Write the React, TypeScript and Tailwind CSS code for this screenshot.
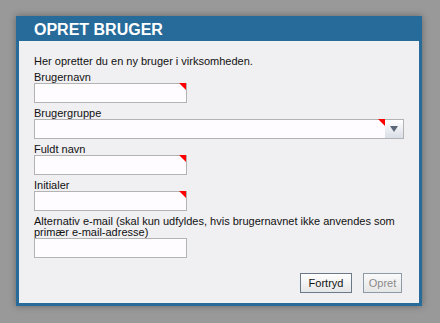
import React from "react";

function Corner() {
  return (
    <div
      className="absolute top-[-1px] right-0 w-0 h-0 border-t-[7px] border-l-[7px] border-t-[#ff0000] border-l-transparent"
    />
  );
}

function Field({ label, children, className = "" }: { label: React.ReactNode; children: React.ReactNode; className?: string }) {
  return (
    <div className={"mt-[4px] " + className}>
      <div className="leading-[12px]">{label}</div>
      {children}
    </div>
  );
}

function TextInput({ required = true }: { required?: boolean }) {
  return (
    <div className="relative w-[153px] h-[20px] border border-[#b3b3b3] bg-[#fefcff]">
      {required && <Corner />}
    </div>
  );
}

export default function App() {
  return (
    <div
      className="w-[440px] h-[323px] bg-[#999999] pl-[16px] pt-[16px] text-[11px] text-[#111111]"
      style={{ fontFamily: '"Liberation Sans", Arial, sans-serif' }}
    >
      <div className="w-[406px] h-[290px] border-[3px] border-[#276b9a] bg-[#f0eff1] flex flex-col shadow-[0_0_7px_rgba(0,0,0,0.35)]">
        <div className="h-[22px] bg-[#276b9a] pl-[15px] text-white font-bold text-[16px] leading-[22px]">
          OPRET BRUGER
        </div>
        <div className="flex-1 flex flex-col pl-[15px] pr-[17px] pt-[14px] pb-[10px]">
          <div className="leading-[12px]">Her opretter du en ny bruger i virksomheden.</div>
          <Field label="Brugernavn">
            <TextInput />
          </Field>
          <Field label="Brugergruppe">
            <div className="relative flex w-[370px] h-[20px] border border-[#b3b3b3] bg-[#fefcff]">
              <div className="relative flex-1">
                <Corner />
              </div>
              <div className="w-[18px] h-full bg-gradient-to-b from-[#ffffff] to-[#d9dee6] flex items-center justify-center">
                <div className="w-0 h-0 border-l-[4px] border-r-[4px] border-t-[6px] border-l-transparent border-r-transparent border-t-[#5b6877]" />
              </div>
            </div>
          </Field>
          <Field label="Fuldt navn">
            <TextInput />
          </Field>
          <Field label="Initialer">
            <TextInput />
          </Field>
          <div className="mt-[5px]">
            <div className="leading-[11px]">
              Alternativ e-mail (skal kun udfyldes, hvis brugernavnet ikke anvendes som
              <br />
              primær e-mail-adresse)
            </div>
            <TextInput required={false} />
          </div>
          <div className="mt-auto flex justify-end gap-[11px]">
            <div className="w-[52px] h-[20px] border border-[#6b7887] bg-gradient-to-b from-[#ffffff] to-[#e6e6e6] flex items-center justify-center text-[#111111]">
              Fortryd
            </div>
            <div className="w-[39px] h-[20px] border border-[#8d9aa8] bg-gradient-to-b from-[#fafafa] to-[#e6e6e6] flex items-center justify-center text-[#8a8a8a]">
              Opret
            </div>
          </div>
        </div>
      </div>
    </div>
  );
}
